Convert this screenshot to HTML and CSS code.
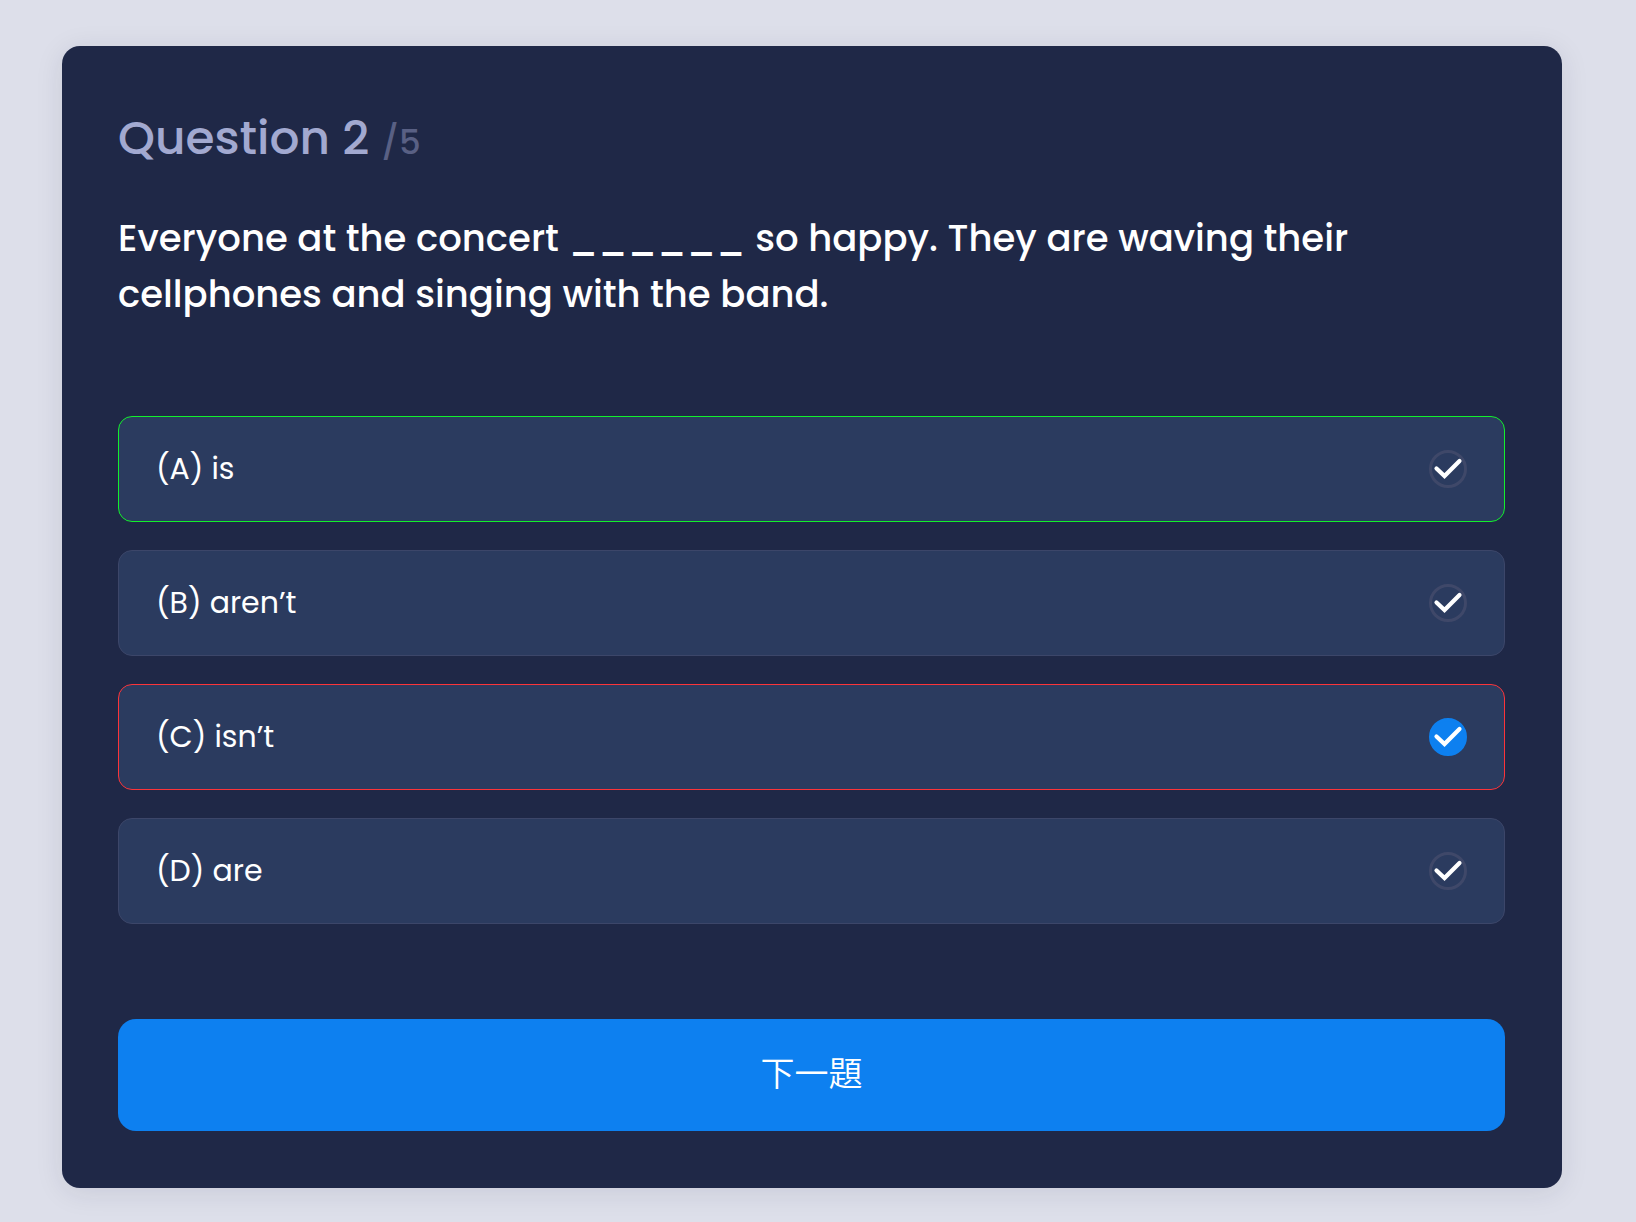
FILE: index.html
```html
<!DOCTYPE html>
<html lang="zh-Hant">
<head>
<meta charset="utf-8">
<meta name="viewport" content="width=device-width, initial-scale=1">
<title>Question 2</title>
<link rel="stylesheet" href="styles.css">
</head>
<body>
<main class="quiz">
  <form class="card">
    <h1 class="progress">Question 2 <span class="total">/5</span></h1>
    <fieldset class="question">
      <legend class="prompt">Everyone at the concert ______ so happy. They are waving their cellphones and singing with the band.</legend>
      <div class="options">
        <label class="option correct">
          <span>(A) is</span>
          <span class="mark"><input type="radio" name="answer" value="A"><svg viewBox="0 0 38 38" aria-hidden="true"><path d="M7.5 18.5 15.5 26 30.5 11"/></svg></span>
        </label>
        <label class="option">
          <span>(B) aren’t</span>
          <span class="mark"><input type="radio" name="answer" value="B"><svg viewBox="0 0 38 38" aria-hidden="true"><path d="M7.5 18.5 15.5 26 30.5 11"/></svg></span>
        </label>
        <label class="option wrong">
          <span>(C) isn’t</span>
          <span class="mark"><input type="radio" name="answer" value="C" checked><svg viewBox="0 0 38 38" aria-hidden="true"><path d="M7.5 18.5 15.5 26 30.5 11"/></svg></span>
        </label>
        <label class="option">
          <span>(D) are</span>
          <span class="mark"><input type="radio" name="answer" value="D"><svg viewBox="0 0 38 38" aria-hidden="true"><path d="M7.5 18.5 15.5 26 30.5 11"/></svg></span>
        </label>
      </div>
    </fieldset>
    <button class="next" type="button">下一題</button>
  </form>
</main>
</body>
</html>
```

FILE: styles.css
```css
* {
  box-sizing: border-box;
}

body {
  margin: 0;
  background: #dddfea;
  color: #fff;
  font-family: Poppins, Inter, "Noto Sans CJK TC", sans-serif;
}

.quiz {
  padding: 46px 74px 34px 62px;
}

.card {
  padding: 56px 57px 57px 56px;
  border-radius: 18px;
  background: #1f2847;
  box-shadow: 0 4px 28px rgba(32, 32, 60, 0.1);
}

.progress {
  margin: 0 0 32px;
  color: #a2a9d0;
  font-size: 47px;
  font-weight: 500;
  line-height: 72px;
}

.total {
  color: #596084;
  font-size: 34px;
  font-weight: 500;
}

.question {
  min-width: 0;
  margin: 0;
  padding: 0;
  border: 0;
}

.prompt {
  padding: 0;
  font-size: 37px;
  font-weight: 500;
  line-height: 56px;
}

.options {
  display: grid;
  gap: 28px;
  margin: 94px 0 95px;
}

.option {
  display: flex;
  align-items: center;
  justify-content: space-between;
  min-height: 106px;
  padding: 0 37px;
  border: 1px solid #3c4669;
  border-radius: 14px;
  background: #2b3b5f;
  font-size: 30px;
  line-height: 44px;
  cursor: pointer;
}

.correct {
  border-color: #12f02c;
}

.wrong {
  border-color: #fc3439;
}

.mark {
  display: grid;
}

.mark input,
.mark svg {
  grid-area: 1 / 1;
  width: 38px;
  height: 38px;
}

.mark input {
  appearance: none;
  margin: 0;
  border: 3px solid #3f4869;
  border-radius: 50%;
}

.mark input:checked {
  border-color: #0d80f0;
  background: #0d80f0;
}

.mark svg {
  fill: none;
  stroke: #fff;
  stroke-width: 4.2;
  stroke-linecap: round;
  pointer-events: none;
}

.next {
  display: block;
  width: 100%;
  min-height: 112px;
  padding: 0 0 4px;
  border: 0;
  border-radius: 18px;
  background: #0d80f0;
  color: #fff;
  font-family: Poppins, "Noto Sans CJK TC", sans-serif;
  font-size: 34px;
  font-weight: 350;
  cursor: pointer;
}
```
